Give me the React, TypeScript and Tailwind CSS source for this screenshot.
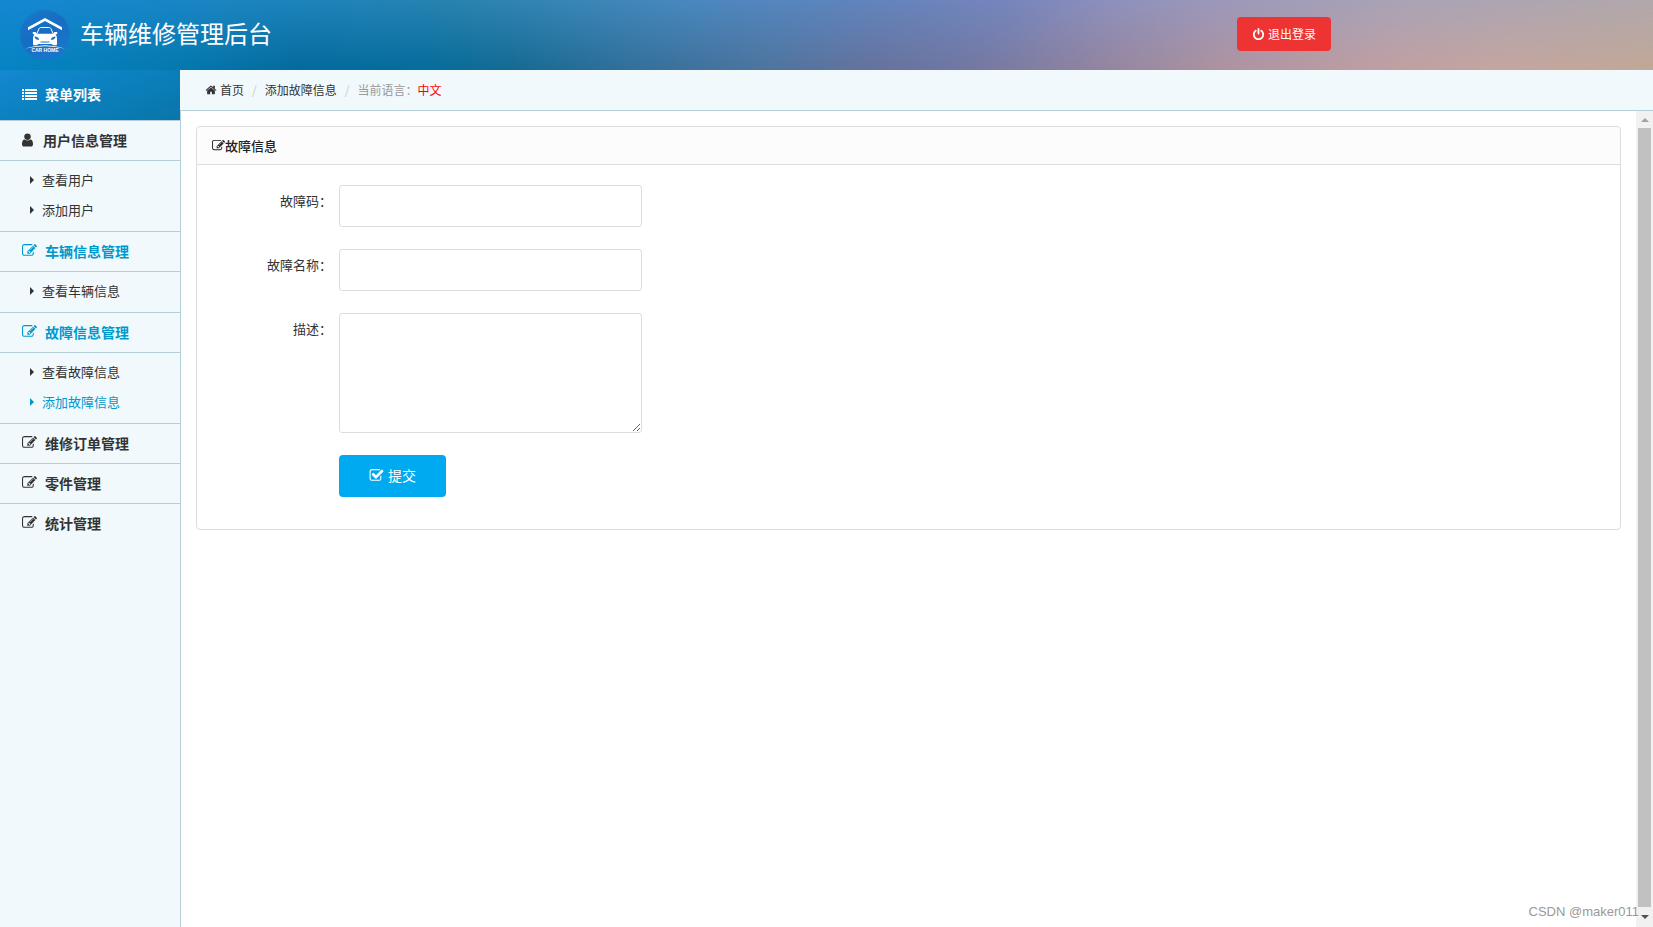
import type { ReactNode } from "react";

type IconProps = { d: string; className?: string; viewBox?: string };

function Icon({ d, className = "size-3.5", viewBox = "0 0 1792 1792" }: IconProps) {
  return (
    <svg viewBox={viewBox} className={`shrink-0 ${className}`} fill="currentColor" aria-hidden="true">
      <path d={d} />
    </svg>
  );
}

const EDIT =
  "M888 1184l116-116-152-152-116 116v56h96v96h56zm440-720q-16-16-33 1l-350 350q-17 17-1 33t33-1l350-350q17-17 1-33zm80 594v190q0 119-84.5 203.5t-203.5 84.5h-832q-119 0-203.5-84.5t-84.5-203.5v-832q0-119 84.5-203.5t203.5-84.5h832q63 0 117 25 15 7 18 23 3 17-9 29l-49 49q-14 14-32 8-23-6-45-6h-832q-66 0-113 47t-47 113v832q0 66 47 113t113 47h832q66 0 113-47t47-113v-126q0-13 9-22l64-64q15-15 35-7t20 29zm-96-738l288 288-672 672h-288v-288zm444 132l-92 92-288-288 92-92q28-28 68-28t68 28l152 152q28 28 28 68t-28 68z";
const CHECK =
  "M1472 930v318q0 119-84.5 203.5t-203.5 84.5h-832q-119 0-203.5-84.5t-84.5-203.5v-832q0-119 84.5-203.5t203.5-84.5h832q63 0 117 25 15 7 18 23 3 17-9 29l-49 49q-10 10-23 10-3 0-9-2-23-6-45-6h-832q-66 0-113 47t-47 113v832q0 66 47 113t113 47h832q66 0 113-47t47-113v-254q0-13 9-22l64-64q10-10 23-10 6 0 12 3 20 8 20 29zm231-489l-814 814q-24 24-57 24t-57-24l-430-430q-24-24-24-57t24-57l110-110q24-24 57-24t57 24l263 263 647-647q24-24 57-24t57 24l110 110q24 24 24 57t-24 57z";
const HOME =
  "M1472 992v480q0 26-19 45t-45 19h-384v-384h-256v384h-384q-26 0-45-19t-19-45v-480q0-1 .5-3t.5-3l575-474 575 474q1 2 1 6zm223-69l-62 74q-8 9-21 11h-3q-13 0-21-7l-692-577-692 577q-12 8-24 7-13-2-21-11l-62-74q-8-10-7-23.5t11-21.5l719-599q32-26 76-26t76 26l244 204v-195q0-14 9-23t23-9h192q14 0 23 9t9 23v408l219 182q10 8 11 21.5t-7 23.5z";
const POWER =
  "M1664 896q0 156-61 298t-164 245-245 164-298 61-298-61-245-164-164-245-61-298q0-182 80.5-343t226.5-270q43-32 95.5-25t83.5 50q32 42 24.5 94.5t-49.5 84.5q-98 74-151.5 181t-53.5 228q0 104 40.5 198.5t109.5 163.5 163.5 109.5 198.5 40.5 198.5-40.5 163.5-109.5 109.5-163.5 40.5-198.5q0-121-53.5-228t-151.5-181q-42-32-49.5-84.5t24.5-94.5q31-43 84-50t95 25q146 109 226.5 270t80.5 343zm-640-768v640q0 52-38 90t-90 38-90-38-38-90v-640q0-52 38-90t90-38 90 38 38 90z";
const USER =
  "M1536 1399q0 109-62.5 187t-150.5 78h-854q-88 0-150.5-78t-62.5-187q0-85 8.5-160.5t31.5-152 58.5-131 94-89 134.5-34.5q131 128 313 128t313-128q76 0 134.5 34.5t94 89 58.5 131 31.5 152 8.5 160.5zm-256-887q0 159-112.5 271.5t-271.5 112.5-271.5-112.5-112.5-271.5 112.5-271.5 271.5-112.5 271.5 112.5 112.5 271.5z";
const LIST =
  "M0 0h2v2H0zM3 0h12v2H3zM0 3h2v2H0zM3 3h12v2H3zM0 6h2v2H0zM3 6h12v2H3zM0 9h2v2H0zM3 9h12v2H3z";
const CARET = "M0 0l4 4-4 4z";

function Logo() {
  return (
    <svg viewBox="0 0 50 50" className="size-[50px] shrink-0" role="img" aria-label="CAR HOME">
      <defs>
        <linearGradient id="disc" x1="0" y1="0" x2="0.6" y2="1">
          <stop offset="0" stopColor="#1a7acb" />
          <stop offset="0.5" stopColor="#166dc3" />
          <stop offset="1" stopColor="#1a76cc" />
        </linearGradient>
      </defs>
      <circle cx="25" cy="25" r="25" fill="url(#disc)" />
      <path d="M8 17.2 25 8l17 9.200v3L25 11 8 20.200z" fill="#fff" />
      <path
        d="M16.500 24.500 19 18.800c.5-1 1.200-1.300 2.200-1.300h7.600c1 0 1.700.3 2.200 1.300l2.500 5.700"
        fill="none"
        stroke="#fff"
        strokeWidth="1"
      />
      <path
        d="M12.800 22h2.800l1 1.800h16.800l1-1.800h2.800v2l-1.600.5c1 1.200 1.400 2.500 1.400 4.500v4.700c0 1-.5 1.500-1.500 1.500h-2c-1 0-1.500-.5-1.500-1.200H18c0 .7-.5 1.200-1.500 1.200h-2c-1 0-1.500-.5-1.500-1.500v-4.700c0-2 .4-3.300 1.400-4.500l-1.600-.5z"
        fill="#fff"
      />
      <path d="M14.500 26.500c2.500.2 4 1 4.800 3.300-2.500.2-4.600-.6-4.800-3.300zM35.500 26.500c-2.500.2-4 1-4.800 3.300 2.500.2 4.600-.6 4.800-3.300z" fill="#1870c5" />
      <path d="M20.500 32h9" stroke="#1870c5" strokeWidth="1" />
      <path d="M4 38.800Q25 31.500 46 38.800 25 33.500 4 38.800z" fill="#fff" />
      <text
        x="25"
        y="42"
        textAnchor="middle"
        fill="#fff"
        fontSize="5"
        fontWeight="700"
        fontFamily="Liberation Sans, Arial, sans-serif"
      >
        CAR HOME
      </text>
    </svg>
  );
}

type MenuGroup = {
  title: string;
  icon: "user" | "edit";
  active?: boolean;
  items?: { label: string; active?: boolean }[];
};

const MENU: MenuGroup[] = [
  { title: "用户信息管理", icon: "user", items: [{ label: "查看用户" }, { label: "添加用户" }] },
  { title: "车辆信息管理", icon: "edit", active: true, items: [{ label: "查看车辆信息" }] },
  {
    title: "故障信息管理",
    icon: "edit",
    active: true,
    items: [{ label: "查看故障信息" }, { label: "添加故障信息", active: true }],
  },
  { title: "维修订单管理", icon: "edit" },
  { title: "零件管理", icon: "edit" },
  { title: "统计管理", icon: "edit" },
];

function Sidebar() {
  return (
    <nav className="flex w-[180px] shrink-0 flex-col">
      <div className="flex h-[50px] items-center gap-2 bg-linear-[160deg,#1488d2,#0b80bd_50%,#0a75aa] pb-0.5 pl-[22px] text-sm font-bold text-white">
        <Icon d={LIST} viewBox="0 0 15 11" className="h-[11px] w-[15px]" />
        菜单列表
      </div>
      {MENU.map((group) => (
        <div key={group.title} className="border-t border-[#b5cfd9]">
          <button
            type="button"
            className={`flex h-[39px] w-full items-center pb-0.5 pl-[22px] text-sm font-bold ${group.active ? "text-[#0099cc]" : "text-[#333]"} ${group.icon === "user" ? "gap-2.5" : "gap-2"}`}
          >
            {group.icon === "user" ? (
              <Icon d={USER} viewBox="256 0 1280 1792" className="h-4 w-[11px]" />
            ) : (
              <Icon d={EDIT} className="size-[15px]" />
            )}
            {group.title}
          </button>
          {group.items && (
            <ul className="border-t border-[#b5cfd9] py-[5px]">
              {group.items.map((item) => (
                <li key={item.label}>
                  <a
                    href="#"
                    className={`flex h-[30px] items-center gap-2 pb-0.5 pl-[30px] text-[13px] ${item.active ? "text-[#0099cc]" : "text-[#333]"}`}
                  >
                    <Icon d={CARET} viewBox="0 0 4 8" className="h-2 w-1" />
                    {item.label}
                  </a>
                </li>
              ))}
            </ul>
          )}
        </div>
      ))}
    </nav>
  );
}

function Breadcrumb() {
  return (
    <div className="flex h-[41px] items-center gap-2 border-b border-[#b5cfd9] pl-[25px] text-xs text-[#333]">
      <a href="#" className="flex items-center gap-[3px]">
        <Icon d={HOME} className="size-3" />
        首页
      </a>
      <span className="text-[#ccc]">/</span>
      <a href="#">添加故障信息</a>
      <span className="text-[#ccc]">/</span>
      <span className="text-[#999]">
        当前语言：<span className="text-[#ff0000]">中文</span>
      </span>
    </div>
  );
}

function Field({ id, label, children }: { id: string; label: string; children: ReactNode }) {
  return (
    <div className="flex items-start">
      <label htmlFor={id} className="w-[142px] shrink-0 pt-1.5 pr-[7px] text-right text-[13px] leading-5 text-[#333]">
        {label}
      </label>
      {children}
    </div>
  );
}

function Scrollbar() {
  return (
    <div className="flex w-[17px] shrink-0 flex-col items-center bg-[#f1f1f1]" aria-hidden="true">
      <div className="flex h-[17px] items-center">
        <Icon d="M0 4l4-4 4 4z" viewBox="0 0 8 4" className="h-1 w-2 text-[#a3a3a3]" />
      </div>
      <div className="w-[13px] flex-1 bg-[#c1c1c1]" />
      <div className="flex h-5 items-center">
        <Icon d="M0 0l4 4 4-4z" viewBox="0 0 8 4" className="h-1 w-2 text-[#505050]" />
      </div>
    </div>
  );
}

export default function App() {
  return (
    <div className="relative flex min-h-screen flex-col bg-[#f1f9fd] font-['Noto_Sans_CJK_SC',sans-serif]">
      <header className="relative flex h-[70px] items-center justify-between bg-[linear-gradient(90deg,#1488d4,#1e84bc_18%,#2a83b0_28%,#3c87b8_36%,#4a88bf_42%,#6384bd_53%,#7686bc_61%,#8e90bc_67%,#9d99ba_74%,#aaa4b6_85%,#b2a8ac)] pr-[322px] pb-0.5 pl-5">
        <div className="absolute inset-0 bg-[linear-gradient(90deg,#0584c2,#0478ad_11%,#046a9c_18%,#056c9b_26%,#156a93_31%,#35709a_39%,#50749e_47%,#66729c_53%,#7076a2_58%,#8880a0_64%,#ae929f_74%,#bf9ea2_83%,#c5a59f_91%,#c0a896)] [mask-image:linear-gradient(transparent,black)]" />
        <div className="relative flex items-center gap-2.5 pt-0.5">
          <Logo />
          <h1 className="pb-1 text-2xl font-normal text-white">车辆维修管理后台</h1>
        </div>
        <button
          type="button"
          className="relative flex h-[34px] items-center gap-[3px] rounded bg-[#ee3333] px-[15px] text-xs text-white"
        >
          <Icon d={POWER} className="size-[13px]" />
          退出登录
        </button>
      </header>

      <div className="flex flex-1">
        <Sidebar />
        <main className="flex min-w-0 flex-1 flex-col">
          <Breadcrumb />
          <div className="flex flex-1 border-l border-[#b5cfd9] bg-white">
            <div className="min-w-0 flex-1 p-[15px]">
              <section className="rounded border border-[#ddd]">
                <h2 className="flex h-[38px] items-center rounded-t border-b border-[#ddd] bg-[#fcfcfc] pl-[15px] text-[13px] font-medium text-[#222]">
                  <Icon d={EDIT} className="size-[13px]" />
                  故障信息
                </h2>
                <form className="flex flex-col gap-[22px] px-0 pt-5 pb-8" onSubmit={(e) => e.preventDefault()}>
                  <Field id="code" label="故障码：">
                    <input
                      id="code"
                      type="text"
                      className="h-[42px] w-[303px] rounded-[3px] border border-[#ddd] bg-white px-2.5 text-sm"
                    />
                  </Field>
                  <Field id="name" label="故障名称：">
                    <input
                      id="name"
                      type="text"
                      className="h-[42px] w-[303px] rounded-[3px] border border-[#ddd] bg-white px-2.5 text-sm"
                    />
                  </Field>
                  <Field id="desc" label="描述：">
                    <textarea
                      id="desc"
                      className="h-[120px] w-[303px] rounded-[3px] border border-[#ddd] bg-white p-2.5 text-sm"
                    />
                  </Field>
                  <div className="pl-[142px]">
                    <button
                      type="submit"
                      className="flex h-[42px] items-center gap-1 rounded bg-[#00aaf0] px-[30px] pb-0.5 text-sm text-white"
                    >
                      <Icon d={CHECK} className="size-[15px]" />
                      提交
                    </button>
                  </div>
                </form>
              </section>
            </div>
            <Scrollbar />
          </div>
        </main>
      </div>

      <div className="pointer-events-none absolute right-[14px] bottom-[5px] font-['Liberation_Sans',Arial,sans-serif] text-[13px] leading-5 text-[#999] [text-shadow:1px_1px_0_#fff]">
        CSDN @maker011
      </div>
    </div>
  );
}
